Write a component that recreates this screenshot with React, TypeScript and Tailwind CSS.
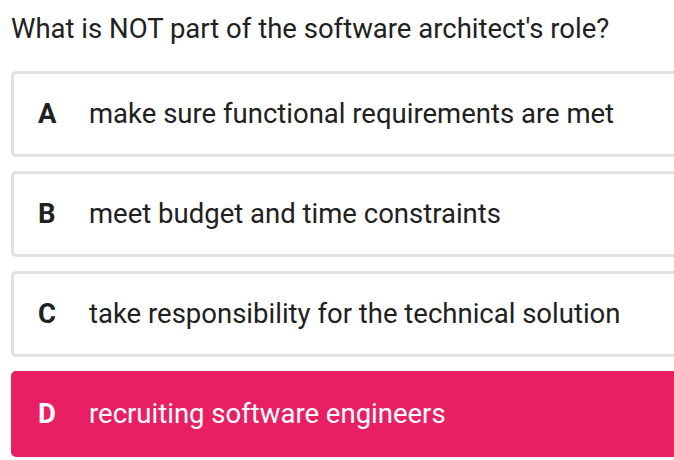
import React from "react";

const options = [
  { letter: "A", text: "make sure functional requirements are met", selected: false },
  { letter: "B", text: "meet budget and time constraints", selected: false },
  { letter: "C", text: "take responsibility for the technical solution", selected: false },
  { letter: "D", text: "recruiting software engineers", selected: true },
];

export default function App() {
  return (
    <div
      className="w-[674px] h-[460px] overflow-hidden bg-white text-[#212121]"
      style={{ fontFamily: "Roboto, 'Noto Sans', sans-serif" }}
    >
      <div className="pl-[11px] pt-[11px]">
        <h1 className="text-[27.5px] leading-[36px] font-normal">
          What is NOT part of the software architect's role?
        </h1>
        <div className="mt-[24px] flex flex-col gap-[14px] w-[700px]">
          {options.map((o) => (
            <div
              key={o.letter}
              className={
                o.selected
                  ? "h-[86px] rounded-[5px] border-[3px] border-[#e91e63] bg-[#e91e63] text-white flex items-center"
                  : "h-[86px] rounded-[5px] border-[3px] border-[#e0e0e0] bg-white flex items-center"
              }
            >
              <span className="w-[75px] pl-[24px] text-[27.5px] font-bold">{o.letter}</span>
              <span className="text-[27.5px]">{o.text}</span>
            </div>
          ))}
        </div>
      </div>
    </div>
  );
}
